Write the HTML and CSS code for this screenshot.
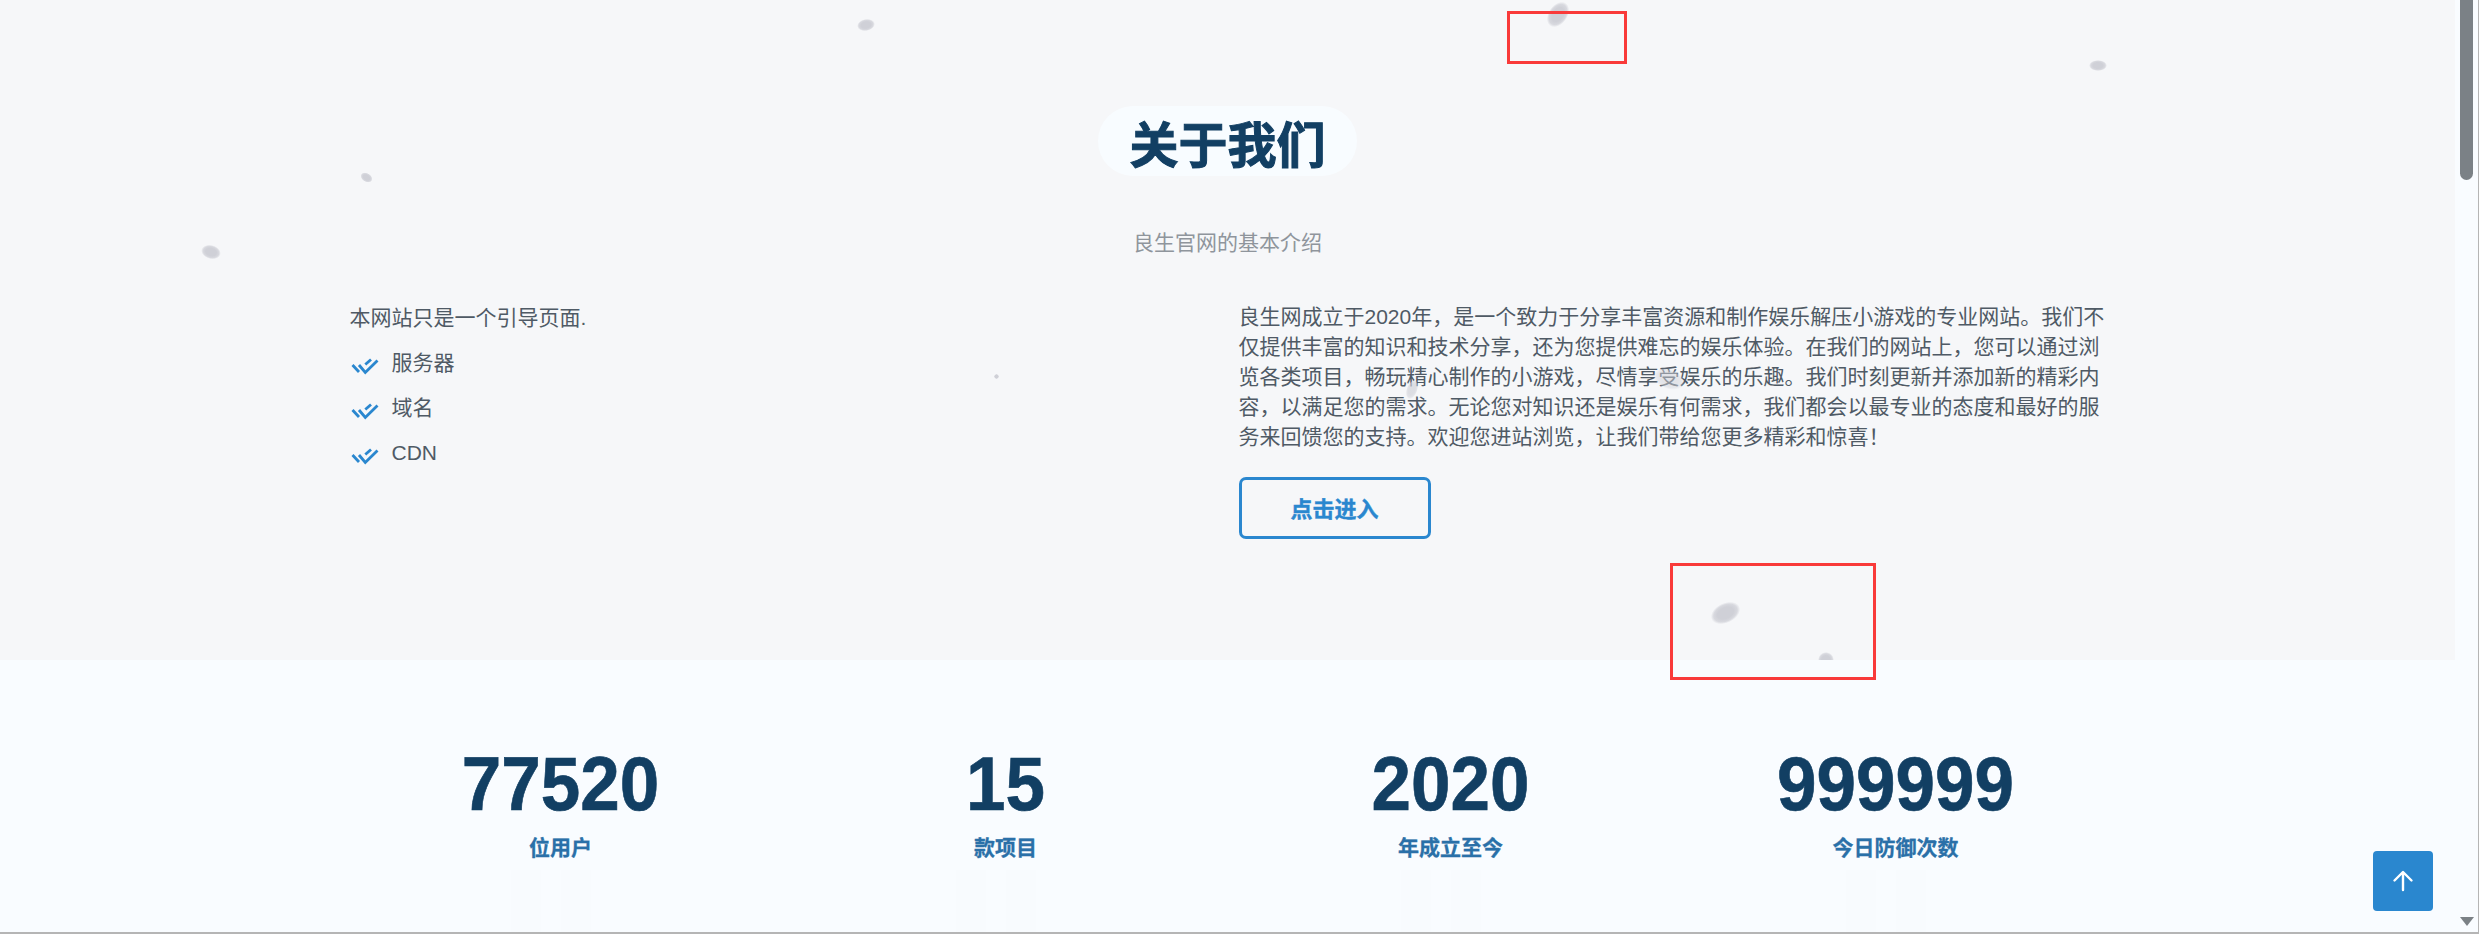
FILE: index.html
```html
<!DOCTYPE html>
<html lang="zh-CN">
<head>
<meta charset="utf-8">
<title>关于我们</title>
<link rel="stylesheet" href="styles.css">
</head>
<body>
<div class="window">
  <main class="page">
    <section class="about">
      <h2 class="title">关于我们</h2>
      <p class="subtitle">良生官网的基本介绍</p>
      <div class="columns">
        <div class="col col-left">
          <p class="intro">本网站只是一个引导页面.</p>
          <ul class="checks">
            <li><svg class="check" viewBox="0 0 26 14"><path d="M.5 6l6.500 7M7 6l6.300 7.500L25.500 1.500M13.300 5.500L19 .5" /></svg>服务器</li>
            <li><svg class="check" viewBox="0 0 26 14"><path d="M.5 6l6.500 7M7 6l6.300 7.500L25.500 1.500M13.300 5.500L19 .5" /></svg>域名</li>
            <li><svg class="check" viewBox="0 0 26 14"><path d="M.5 6l6.500 7M7 6l6.300 7.500L25.500 1.500M13.300 5.500L19 .5" /></svg>CDN</li>
          </ul>
        </div>
        <div class="col col-right">
          <p class="body">良生网成立于2020年，是一个致力于分享丰富资源和制作娱乐解压小游戏的专业网站。我们不仅提供丰富的知识和技术分享，还为您提供难忘的娱乐体验。在我们的网站上，您可以通过浏览各类项目，畅玩精心制作的小游戏，尽情享受娱乐的乐趣。我们时刻更新并添加新的精彩内容，以满足您的需求。无论您对知识还是娱乐有何需求，我们都会以最专业的态度和最好的服务来回馈您的支持。欢迎您进站浏览，让我们带给您更多精彩和惊喜！</p>
          <a class="enter" href="#">点击进入</a>
        </div>
      </div>
    </section>
    <section class="stats">
      <div class="stat"><div class="num">77520</div><div class="label">位用户</div></div>
      <div class="stat"><div class="num">15</div><div class="label">款项目</div></div>
      <div class="stat"><div class="num">2020</div><div class="label">年成立至今</div></div>
      <div class="stat"><div class="num">999999</div><div class="label">今日防御次数</div></div>
    </section>
  </main>
  <aside class="scrollbar">
    <div class="thumb"></div>
    <div class="arrow-down"></div>
  </aside>

  <span class="snow s1"></span>
  <span class="snow s2"></span>
  <span class="snow s3"></span>
  <span class="snow s4"></span>
  <span class="snow s5"></span>
  <span class="snow s6"></span>
  <span class="snow s7"></span>
  <span class="snow s8"></span>
  <span class="snow s9"></span>
  <span class="snow s10"></span>

  <div class="mark m1"></div>
  <div class="mark m2"></div>

  <a class="totop" href="#"><svg viewBox="0 0 24 24"><path d="M12 21V3.500M3.500 11.500L12 3l8.500 8.500"/></svg></a>
</div>
</body>
</html>
```
FILE: styles.css
```css
* { box-sizing: border-box; }
html, body { margin: 0; padding: 0; height: 100%; overflow: hidden; }
body {
  font-family: "Liberation Sans", "Noto Sans CJK SC", sans-serif;
  background: #f9fcff;
}
.window {
  position: relative;
  display: flex;
  width: 2479px;
  height: 934px;
  overflow: hidden;
  border-right: 1px solid #b5b5b5;
  border-bottom: 2px solid #b5b5b5;
}
.page { flex: 1; min-width: 0; display: flex; flex-direction: column; }

.about {
  height: 660px;
  background: #f6f7f9;
  padding-top: 106px;
  display: flex;
  flex-direction: column;
  align-items: center;
}
.title {
  margin: 0;
  height: 70px;
  line-height: 60px;
  padding: 10px 31px 0;
  border-radius: 35px;
  background: #f8fcff;
  color: #123f63;
  font-size: 49px;
  font-weight: 700;
  -webkit-text-stroke: 1px #123f63;
}
.subtitle {
  margin: 52px 0 0;
  font-size: 21px;
  line-height: 30px;
  color: #8f959c;
}
.columns {
  display: grid;
  grid-template-columns: 889px 891px;
  width: 1780px;
  margin-top: 44px;
}
.col { padding: 0 12px; }
.intro, .body {
  margin: 0;
  font-size: 21px;
  line-height: 30px;
  color: #4f5a65;
}
.intro { margin-top: 1px; }
.checks { list-style: none; margin: 0; padding: 0; }
.checks li {
  display: flex;
  align-items: center;
  height: 45px;
  font-size: 21px;
  line-height: 30px;
  color: #4f5a65;
}
.checks li:first-child { margin-top: 7px; }
.check {
  width: 26px;
  height: 14px;
  margin: 6px 14px 0 2px;
  fill: none;
  stroke: #2a87cf;
  stroke-width: 2.8;
  overflow: visible;
}
.enter {
  display: flex;
  align-items: center;
  justify-content: center;
  width: 192px;
  height: 62px;
  margin-top: 25px;
  padding-bottom: 2px;
  border: 3px solid #2a87cf;
  border-radius: 7px;
  color: #2a87cf;
  font-size: 22px;
  font-weight: 700;
  -webkit-text-stroke: .4px #2a87cf;
  text-decoration: none;
}

.stats {
  flex: 1;
  width: 1780px;
  margin-left: 338px;
  display: grid;
  grid-template-columns: repeat(4, 445px);
  align-content: start;
}
.stat {
  position: relative;
  text-align: center;
  padding-top: 89px;
}
.num {
  font-size: 71px;
  font-weight: 700;
  line-height: 72px;
  color: #123f63;
  -webkit-text-stroke: .6px #123f63;
  transform: scaleY(1.06);
}
.label {
  margin-top: 12px;
  font-size: 21px;
  font-weight: 700;
  line-height: 30px;
  color: #2a70a8;
  -webkit-text-stroke: .3px #2a70a8;
}
.stat::after {
  content: "";
  position: absolute;
  left: 50%;
  top: 210px;
  width: 100px;
  height: 62px;
  transform: translateX(-50%);
  background: repeating-linear-gradient(to right, #f8fbfe 0 30px, #f9fcff 30px 50px);
}

.scrollbar {
  position: relative;
  flex: 0 0 23px;
  background: #f9fcff;
}
.thumb {
  position: absolute;
  left: 5px;
  top: 0;
  width: 13px;
  height: 180px;
  background: #7b8186;
  border-radius: 0 0 7px 7px;
}
.arrow-down {
  position: absolute;
  left: 5px;
  bottom: 6px;
  width: 0;
  height: 0;
  border-left: 7px solid transparent;
  border-right: 7px solid transparent;
  border-top: 9px solid #7b8186;
}

.snow {
  position: absolute;
  border-radius: 50%;
  background: radial-gradient(closest-side, #cfd0d7 55%, #d8d9df 80%, rgba(220, 221, 226, 0) 100%);
}
.s1 { left: 857px; top: 19px; width: 18px; height: 12px; transform: rotate(-10deg); }
.s2 { left: 1544px; top: 5px; width: 28px; height: 19px; transform: rotate(-55deg); }
.s3 { left: 2089px; top: 60px; width: 18px; height: 11px; }
.s4 { left: 360px; top: 173px; width: 13px; height: 9px; transform: rotate(30deg); }
.s5 { left: 201px; top: 245px; width: 20px; height: 14px; transform: rotate(15deg); }
.s6 { left: 994px; top: 374px; width: 5px; height: 5px; }
.s7 { left: 1402px; top: 384px; width: 20px; height: 11px; transform: rotate(-70deg); opacity: .65; }
.s8 { left: 1653px; top: 369px; width: 32px; height: 20px; transform: rotate(20deg); opacity: .5; }
.s9 { left: 1710px; top: 603px; width: 31px; height: 20px; transform: rotate(-25deg); }
.s10 { left: 1818px; top: 652px; width: 16px; height: 16px; clip-path: inset(0 0 50% 0); }

.mark {
  position: absolute;
  border: 3px solid #f93a3a;
}
.m1 { left: 1507px; top: 11px; width: 120px; height: 53px; }
.m2 { left: 1670px; top: 563px; width: 206px; height: 117px; }

.totop {
  position: absolute;
  left: 2373px;
  top: 851px;
  width: 60px;
  height: 60px;
  border-radius: 4px;
  background: #2a87cf;
  display: flex;
  align-items: center;
  justify-content: center;
}
.totop svg {
  width: 24px;
  height: 24px;
  fill: none;
  stroke: #fff;
  stroke-width: 2.4;
  stroke-linecap: round;
  stroke-linejoin: round;
}
```
